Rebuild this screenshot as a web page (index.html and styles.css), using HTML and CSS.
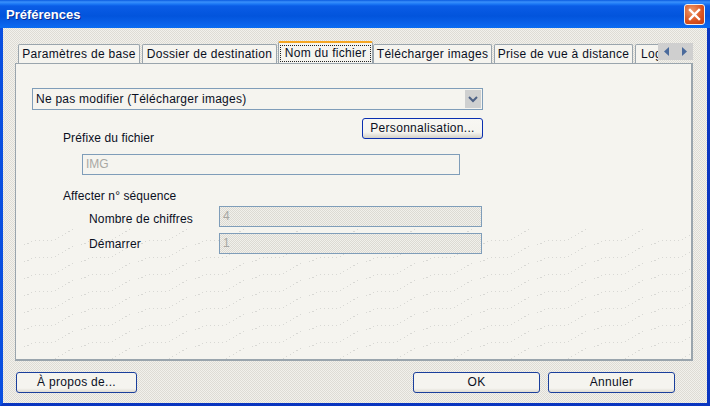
FILE: index.html
```html
<!DOCTYPE html>
<html lang="fr">
<head>
  <meta charset="UTF-8" />
  <title>Préférences</title>
  <link rel="stylesheet" href="styles.css">
</head>
<body>
  <div class="window">
    <div class="titlebar">
      <span class="title">Préférences</span>
      <div class="close">
        <svg width="13" height="13" viewBox="0 0 13 13"><path d="M2 2 L11 11 M11 2 L2 11" stroke="#fff" stroke-width="2.4" stroke-linecap="square" fill="none"/></svg>
      </div>
    </div>

    <div class="content">
      <div class="tabs">
        <div class="tab-list">
          <div class="tab tab-base">Paramètres de base</div>
          <div class="tab tab-dest">Dossier de destination</div>
          <div class="tab active"><span class="tab-focus">Nom du fichier</span></div>
          <div class="tab tab-dl">Télécharger images</div>
          <div class="tab tab-remote">Prise de vue à distance</div>
          <div class="tab tab-log">Logiciels</div>
        </div>
        <div class="tab-scroll">
          <svg width="5" height="9" viewBox="0 0 5 9"><path d="M5 0 V9 L0 4.5 Z" fill="#4a6a9c"/></svg>
          <svg width="5" height="9" viewBox="0 0 5 9"><path d="M0 0 V9 L5 4.5 Z" fill="#4a6a9c"/></svg>
        </div>
      </div>

      <div class="panel">
        <svg class="waves" width="676" height="130">
          <defs>
            <pattern id="wave" width="57" height="17" patternUnits="userSpaceOnUse">
              <path d="M0 17 H6 L20 11 H38 L50 4 L57 0" fill="none" stroke="#d8d8d4" stroke-width="1" stroke-dasharray="1 3" shape-rendering="crispEdges"/>
            </pattern>
          </defs>
          <rect width="676" height="130" fill="url(#wave)"/>
        </svg>

        <div class="form">
          <div class="select">
            <span class="select-value">Ne pas modifier (Télécharger images)</span>
            <span class="select-arrow">
              <svg width="10" height="7" viewBox="0 0 10 7"><path d="M1 1 L5 5 L9 1" fill="none" stroke="#4d6185" stroke-width="2"/></svg>
            </span>
          </div>

          <div class="prefix-row">
            <span class="label">Préfixe du fichier</span>
            <div class="btn btn-focus custom-btn">Personnalisation...</div>
          </div>
          <div class="input prefix-input">IMG</div>

          <div class="label seq-title">Affecter n° séquence</div>
          <div class="seq-row">
            <span class="seq-label">Nombre de chiffres</span>
            <div class="input hatched">4</div>
          </div>
          <div class="seq-row seq-row-2">
            <span class="seq-label">Démarrer</span>
            <div class="input hatched">1</div>
          </div>
        </div>
      </div>

      <div class="footer">
        <div class="btn about-btn">À propos de...</div>
        <div class="footer-right">
          <div class="btn action-btn">OK</div>
          <div class="btn action-btn">Annuler</div>
        </div>
      </div>
    </div>
  </div>
</body>
</html>
```

FILE: styles.css
```css
body {
  margin: 0;
  font-family: "Liberation Sans", Arial, sans-serif;
  font-size: 12px;
  letter-spacing: 0.3px;
  color: #0a0f1e;
  background: #0a3fd0;
}

.window {
  width: 710px;
  height: 406px;
  box-sizing: border-box;
  display: flex;
  flex-direction: column;
  border-left: 3px solid #0a4fe0;
  border-right: 3px solid #0a36c0;
  border-bottom: 3px solid #0a36c0;
  background-color: #ecebe5;
  background-image: conic-gradient(#dedcd5 25%, #f2f1ec 0 50%, #dedcd5 0 75%, #f2f1ec 0);
  background-size: 2px 2px;
}

.titlebar {
  height: 28px;
  flex: none;
  margin: 0 -3px;
  padding: 0 5px 0 6px;
  display: flex;
  align-items: center;
  justify-content: space-between;
  background: linear-gradient(#0a5ae0 0, #3a90fb 2px, #1c78f5 4px, #0a5ce6 6px, #0254dc 16px, #0a62ea 24px, #0a6cf2 28px);
}

.title {
  color: #fff;
  font-weight: bold;
  font-size: 13px;
  letter-spacing: 0;
  text-shadow: 1px 1px 0 #0a2c90;
}

.close {
  width: 19px;
  height: 19px;
  display: flex;
  align-items: center;
  justify-content: center;
  border: 1px solid #f4f0ea;
  border-radius: 3px;
  background: radial-gradient(circle at 35% 30%, #ee9a6a, #d9521f 60%, #c13c12);
}

.content {
  flex: 1;
  display: flex;
  flex-direction: column;
  padding: 13px 14px 0 12px;
}

/* onglets */
.tabs {
  height: 22px;
  flex: none;
  padding-left: 3px;
  display: flex;
  align-items: flex-start;
}

.tab-list {
  width: 640px;
  height: 22px;
  flex: none;
  display: flex;
  align-items: flex-end;
  overflow: hidden;
}

.tab {
  height: 19px;
  box-sizing: border-box;
  line-height: 18px;
  margin-right: 2px;
  flex: none;
  text-align: center;
  white-space: nowrap;
  border: 1px solid #9aa5ad;
  border-bottom: none;
  border-radius: 2px 2px 0 0;
  background: #f5f4ef;
}

.tab-base { width: 122px; }
.tab-dest { width: 135px; }
.tab-dl { width: 119px; }
.tab-remote { width: 139px; }
.tab-log { width: 60px; padding-left: 5px; text-align: left; }

.tab.active {
  width: 95px;
  height: 22px;
  line-height: 17px;
  margin: 0 0 0 -1px;
  border-top: 2px solid #f5a623;
  position: relative;
  z-index: 1;
}

.tab-focus {
  display: block;
  margin: 2px 1px 0;
  height: 17px;
  outline: 1px dotted #222;
  outline-offset: -1px;
}

.tab-scroll {
  width: 35px;
  height: 17px;
  flex: none;
  display: flex;
  align-items: center;
  justify-content: space-around;
  margin-top: 2px;
  background: #cfcfcf;
}

.panel {
  position: relative;
  height: 298px;
  flex: none;
  box-sizing: border-box;
  border: 1px solid #9aa5ad;
  border-right-width: 2px;
  border-bottom-width: 2px;
  background: #f5f4ef;
}

.waves {
  position: absolute;
  left: 0;
  bottom: 0;
}

.form {
  position: relative;
  width: 451px;
  margin: 24px 0 0 16px;
  display: flex;
  flex-direction: column;
}

.select {
  height: 22px;
  box-sizing: border-box;
  display: flex;
  align-items: center;
  justify-content: space-between;
  padding: 0 1px 0 3px;
  border: 1px solid #7f9db9;
  background: #f5f4ef;
}

.select-value {
  letter-spacing: 0.25px;
}

.select-arrow {
  width: 16px;
  height: 18px;
  display: flex;
  align-items: center;
  justify-content: center;
  background: #cfd0d0;
}

.prefix-row {
  height: 28px;
  margin-top: 8px;
  padding-left: 31px;
  display: flex;
  justify-content: space-between;
}

.label {
  line-height: 16px;
  letter-spacing: 0.1px;
}

.prefix-row .label {
  align-self: flex-end;
}

.input {
  height: 21px;
  box-sizing: border-box;
  line-height: 19px;
  padding: 0 3px;
  letter-spacing: 0;
  border: 1px solid #7f9db9;
  color: #a8a8a4;
  background: #f5f4ef;
}

.prefix-input {
  width: 378px;
  margin: 8px 0 0 50px;
}

.seq-title {
  margin: 13px 0 0 31px;
}

.seq-row {
  height: 21px;
  margin-top: 2px;
  padding-left: 57px;
  display: flex;
  align-items: flex-end;
}

.seq-row-2 {
  margin-top: 6px;
  align-items: center;
}

.seq-label {
  width: 130px;
  line-height: 16px;
  letter-spacing: 0.15px;
}

.hatched {
  width: 263px;
  background-color: #e8e7e1;
  background-image: conic-gradient(#dcdad3 25%, #f1f0eb 0 50%, #dcdad3 0 75%, #f1f0eb 0);
  background-size: 2px 2px;
}

/* boutons */
.btn {
  height: 21px;
  box-sizing: border-box;
  line-height: 19px;
  text-align: center;
  border: 1px solid #1a3f9c;
  border-radius: 3px;
  background: linear-gradient(#f5f4ef 0, #f5f4ef 80%, #dedbd2 100%);
}

.btn-focus {
  border-color: #0a2fb0;
  background: linear-gradient(#f8f7f3 0, #f5f4ef 70%, #d4d1c8 100%);
}

.custom-btn {
  width: 121px;
  flex: none;
}

.footer {
  margin-top: 11px;
  padding-left: 1px;
  display: flex;
  justify-content: space-between;
}

.footer-right {
  display: flex;
  gap: 8px;
  margin-right: 18px;
}

.about-btn {
  width: 121px;
}

.action-btn {
  width: 127px;
}
```
